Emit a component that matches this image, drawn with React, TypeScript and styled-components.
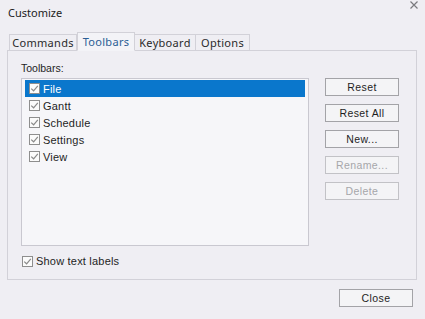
import React from 'react';
import styled, { createGlobalStyle } from 'styled-components';

const GlobalStyle = createGlobalStyle`
  html, body {
    margin: 0;
    padding: 0;
    background: #efeef3;
  }
  * {
    box-sizing: border-box;
  }
`;

const Dialog = styled.div`
  width: 425px;
  height: 319px;
  background: #efeef3;
  padding: 0 8px 0 7px;
  display: flex;
  flex-direction: column;
  font-family: 'Liberation Sans', Arial, sans-serif;
  color: #1e1e1e;
  overflow: hidden;
`;

const TitleBar = styled.div`
  height: 32px;
  display: flex;
  align-items: flex-start;
  justify-content: space-between;
`;

const Title = styled.div`
  font-family: 'Noto Sans', sans-serif;
  font-size: 11px;
  line-height: 16px;
  margin-top: 5px;
  margin-left: 1px;
  color: #222;
`;

const CloseX = styled.div`
  width: 12px;
  height: 12px;
  margin-top: -1px;
  margin-right: -3px;
  display: flex;
  align-items: center;
  justify-content: center;
`;

const TabStrip = styled.div`
  display: flex;
  align-items: flex-end;
  height: 18px;
  padding-left: 2px;
  position: relative;
  z-index: 1;
`;

const Tab = styled.div<{ $active?: boolean; $w: number }>`
  width: ${(p) => p.$w}px;
  text-align: center;
  font-family: 'Noto Sans', sans-serif;
  font-size: 11px;
  letter-spacing: 0.3px;
  height: ${(p) => (p.$active ? '19px' : '16px')};
  line-height: ${(p) => (p.$active ? '18px' : '15px')};
  border: 1px solid #d2d1d8;
  border-bottom: ${(p) => (p.$active ? '1px solid #f3f3f7' : 'none')};
  border-left: ${(p) => (p.$active ? '1px solid #d2d1d8' : 'none')};
  background: ${(p) => (p.$active ? '#f3f3f7' : '#efeef3')};
  color: ${(p) => (p.$active ? '#2b5d94' : '#2a2a2a')};
  margin-bottom: ${(p) => (p.$active ? '-1px' : '0')};
  &:first-child {
    border-left: 1px solid #d2d1d8;
  }
`;

const Panel = styled.div`
  height: 230px;
  border: 1px solid #d2d1d8;
  background: #efeef3;
  padding: 10px 0 0 13px;
  display: flex;
  flex-direction: column;
`;

const Label = styled.div`
  font-size: 10.5px;
  line-height: 14px;
  margin-bottom: 3px;
`;

const Body = styled.div`
  display: flex;
  gap: 16px;
`;

const ListBox = styled.div`
  width: 288px;
  height: 168px;
  border: 1px solid #c9c8d0;
  background: #f6f6f9;
  padding: 1px 3px;
`;

const Row = styled.div<{ $selected?: boolean }>`
  height: 17px;
  display: flex;
  align-items: center;
  gap: 3px;
  padding-left: 4px;
  font-size: 11px;
  letter-spacing: 0.2px;
  background: ${(p) => (p.$selected ? '#0a77cc' : 'transparent')};
  color: ${(p) => (p.$selected ? '#ffffff' : '#1e1e1e')};
`;

const Box = styled.span`
  width: 11px;
  height: 11px;
  border: 1px solid #8e8e8e;
  background: #fbfbfb;
  display: inline-flex;
  align-items: center;
  justify-content: center;
  flex-shrink: 0;
`;

const Buttons = styled.div`
  display: flex;
  flex-direction: column;
  gap: 8px;
`;

const Button = styled.div<{ $disabled?: boolean }>`
  width: 74px;
  height: 18px;
  border: 1px solid ${(p) => (p.$disabled ? '#c2c2c6' : '#a3a3a7')};
  background: #f4f4f6;
  color: ${(p) => (p.$disabled ? '#a6a6aa' : '#1e1e1e')};
  font-size: 10.5px;
  letter-spacing: 0.4px;
  display: flex;
  align-items: center;
  justify-content: center;
`;

const LabelCheck = styled.div`
  display: flex;
  align-items: center;
  gap: 3px;
  margin-top: 9px;
  margin-left: 1px;
  font-size: 11px;
  letter-spacing: 0.2px;
`;

const Footer = styled.div`
  display: flex;
  justify-content: flex-end;
  padding-top: 9px;
  padding-right: 4px;
`;

const Check = () => (
  <svg width="9" height="9" viewBox="0 0 9 9">
    <path d="M1.2 4.6 L3.6 6.8 L7.8 1.8" fill="none" stroke="#8a8a8a" strokeWidth="1.2" />
  </svg>
);

const CheckBox = () => (
  <Box>
    <Check />
  </Box>
);

const toolbars = ['File', 'Gantt', 'Schedule', 'Settings', 'View'];

const tabs = [
  { name: 'Commands', w: 68 },
  { name: 'Toolbars', w: 58 },
  { name: 'Keyboard', w: 61 },
  { name: 'Options', w: 54 },
];

export default function App() {
  return (
    <Dialog>
      <GlobalStyle />
      <TitleBar>
        <Title>Customize</Title>
        <CloseX>
          <svg width="8" height="8" viewBox="0 0 8 8">
            <path d="M0.5 0.5 L7.5 7.5 M7.5 0.5 L0.5 7.5" stroke="#7a7a7e" strokeWidth="1.2" />
          </svg>
        </CloseX>
      </TitleBar>
      <TabStrip>
        {tabs.map((t) => (
          <Tab key={t.name} $w={t.w} $active={t.name === 'Toolbars'}>
            {t.name}
          </Tab>
        ))}
      </TabStrip>
      <Panel>
        <Label>Toolbars:</Label>
        <Body>
          <ListBox>
            {toolbars.map((name, i) => (
              <Row key={name} $selected={i === 0}>
                <CheckBox />
                {name}
              </Row>
            ))}
          </ListBox>
          <Buttons>
            <Button>Reset</Button>
            <Button>Reset All</Button>
            <Button>New...</Button>
            <Button $disabled>Rename...</Button>
            <Button $disabled>Delete</Button>
          </Buttons>
        </Body>
        <LabelCheck>
          <CheckBox />
          Show text labels
        </LabelCheck>
      </Panel>
      <Footer>
        <Button>Close</Button>
      </Footer>
    </Dialog>
  );
}
